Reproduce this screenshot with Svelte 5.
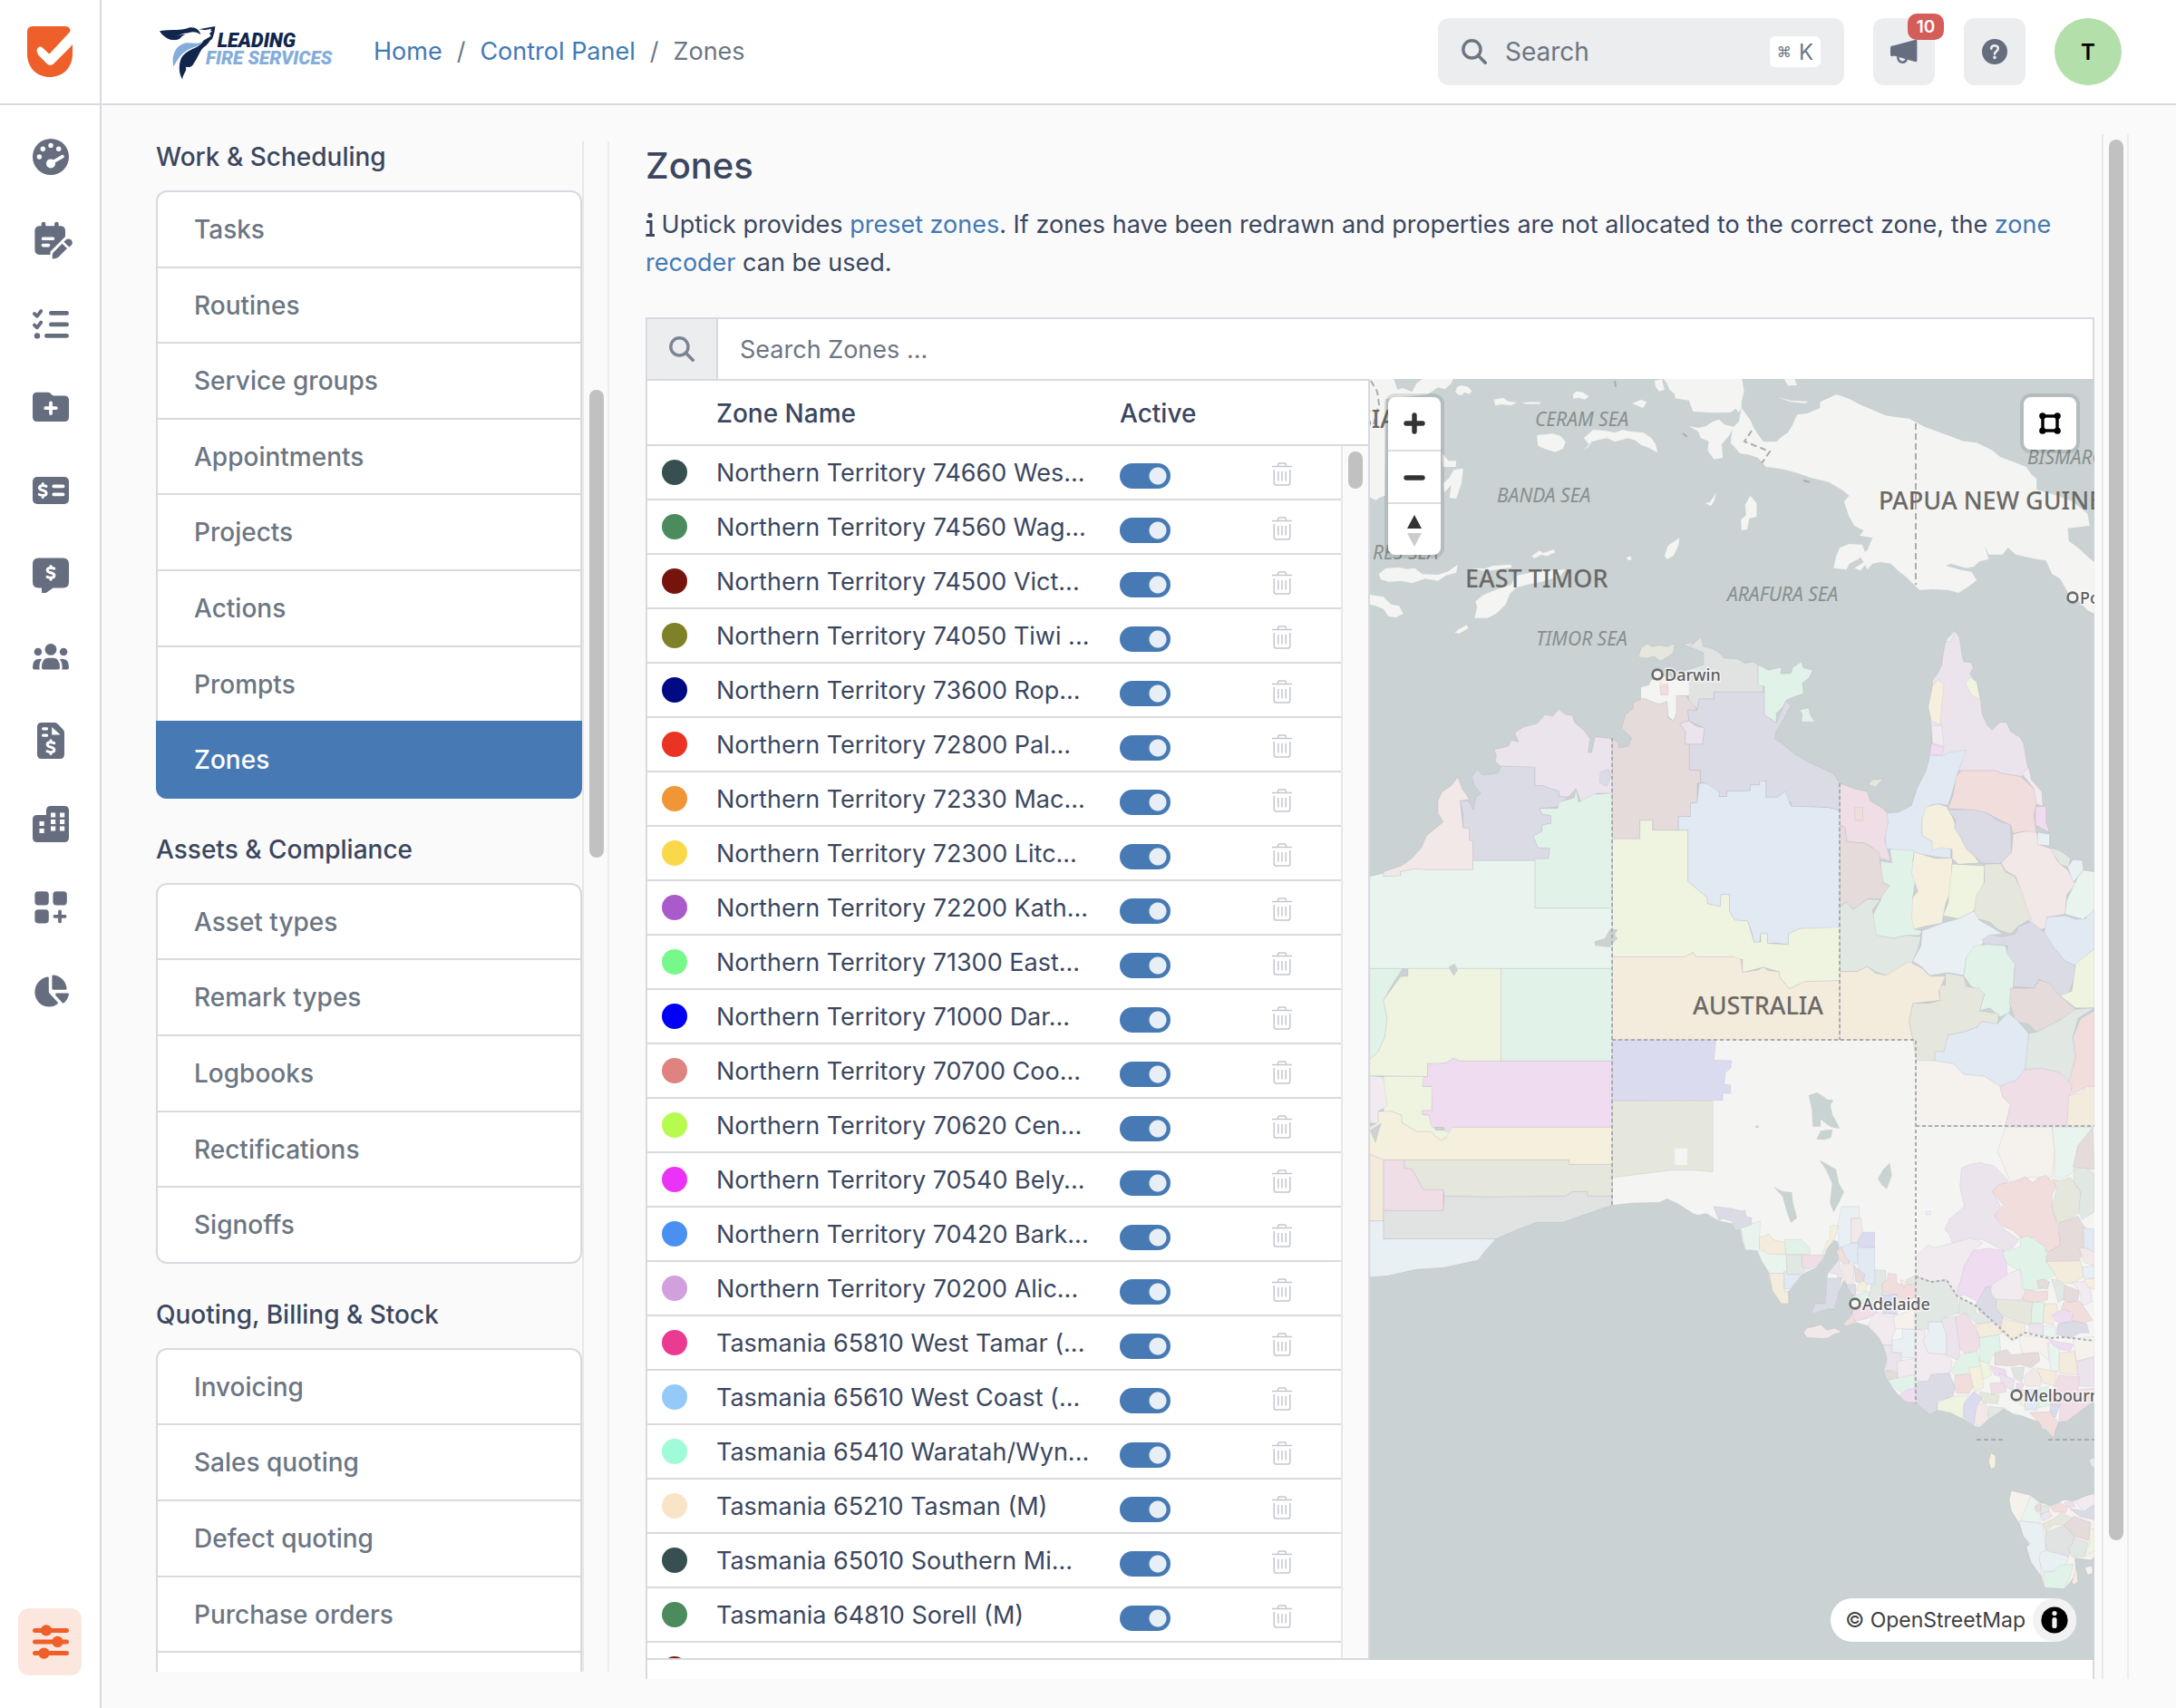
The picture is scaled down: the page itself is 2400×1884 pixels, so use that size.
<script>
  const nav = [
    'Dashboard', 'Calendar', 'Tasks', 'Projects', 'Invoices', 'Quotes',
    'Clients', 'Purchase orders', 'Properties', 'Apps', 'Reports'
  ];

  const groups = [
    { title: 'Work & Scheduling', items: ['Tasks', 'Routines', 'Service groups', 'Appointments', 'Projects', 'Actions', 'Prompts', 'Zones'] },
    { title: 'Assets & Compliance', items: ['Asset types', 'Remark types', 'Logbooks', 'Rectifications', 'Signoffs'] },
    { title: 'Quoting, Billing & Stock', items: ['Invoicing', 'Sales quoting', 'Defect quoting', 'Purchase orders', ''] }
  ];

  // Colour and short display name of each zone
  const zones = [
    ['#374f50', 'Northern Territory 74660 Wes...'],
    ['#4b8b5e', 'Northern Territory 74560 Wag...'],
    ['#75140c', 'Northern Territory 74500 Vict...'],
    ['#7f8128', 'Northern Territory 74050 Tiwi ...'],
    ['#000a83', 'Northern Territory 73600 Rop...'],
    ['#ea3323', 'Northern Territory 72800 Pal...'],
    ['#f09637', 'Northern Territory 72330 Mac...'],
    ['#f9d849', 'Northern Territory 72300 Litc...'],
    ['#a95bcc', 'Northern Territory 72200 Kath...'],
    ['#76f98a', 'Northern Territory 71300 East...'],
    ['#0000f5', 'Northern Territory 71000 Dar...'],
    ['#df8380', 'Northern Territory 70700 Coo...'],
    ['#b7fb50', 'Northern Territory 70620 Cen...'],
    ['#ea33f7', 'Northern Territory 70540 Bely...'],
    ['#4a90f3', 'Northern Territory 70420 Bark...'],
    ['#d1a0dd', 'Northern Territory 70200 Alic...'],
    ['#eb3a92', 'Tasmania 65810 West Tamar (...'],
    ['#94caf7', 'Tasmania 65610 West Coast (...'],
    ['#a0fbd9', 'Tasmania 65410 Waratah/Wyn...'],
    ['#fae4c8', 'Tasmania 65210 Tasman (M)'],
    ['#374f50', 'Tasmania 65010 Southern Mi...'],
    ['#4b8b5e', 'Tasmania 64810 Sorell (M)'],
    ['#75140c', '']
  ];

  const c = {
    sea: '#cad2d3', land: '#f4f4f2', lilac: '#ece4ec', slate: '#dbdbe6', green: '#e1f3e8', mint: '#eaf4ef',
    lime: '#eff4e1', orange: '#f3ebdc', yellow: '#f5f0de', blue: '#e1e9f3', pink: '#f0dee6', brown: '#e5dbda',
    rose: '#f3e8e8', red: '#f1dddc', sage: '#e1e8e3', khaki: '#e6e7dc', ice: '#e9f0f4', magenta: '#f0dcf0',
    violet: '#dbdbf0', grey: '#e0e3e2', cream: '#f5f1ed', mauve: '#f1ebf0'
  };

  // Islands and Papua, north of the continent
  const north = [
    '19,54 65,54 72,90 82,84 100,97 108,70 120,54 179,54 175,70 163,88 150,82 130,105 50,120 48,440 38,446 30,455 19,445',
    '183,95 187,80 195,75 208,80 215,95 210,104 200,98 196,108 188,106',
    '409,105 416,95 428,98 440,112 432,122 420,116 410,120',
    '257,122 275,117 285,128 302,132 290,142 272,138 260,142',
    '310,133 330,130 348,131 345,137 320,137',
    '523,135 540,123 551,130 544,150 532,142',
    '566,60 580,55 585,90 575,95 568,80',
    '583,54 734,54 738,95 733,130 733,150 728,165 722,152 712,165 680,166 640,162 632,125 605,118 605,105 595,90 590,70',
    '733,150 750,190 755,210 762,230 775,262 800,262 810,245 822,232 830,210 840,172 860,168 884,150 884,130 900,118 915,105 940,120 960,138 1010,175 1030,180 1055,185 1085,212 1120,235 1160,260 1185,265 1215,290 1230,312 1250,325 1280,345 1290,370 1300,385 1300,420 1340,440 1370,460 1398,500 1402,540 1360,548 1362,590 1385,620 1400,645 1411,660 1411,830 1398,820 1385,795 1375,780 1360,760 1345,715 1330,700 1318,655 1300,650 1260,635 1245,612 1235,635 1208,635 1200,605 1208,650 1190,658 1180,675 1165,680 1135,665 1125,672 1155,686 1175,692 1185,720 1170,740 1150,762 1130,752 1100,750 1075,752 1050,710 1035,690 1020,665 1000,660 985,665 975,685 968,660 960,640 975,620 985,580 960,572 968,556 950,540 940,510 930,460 940,440 925,420 900,395 865,380 840,365 810,352 780,345 765,315 748,305 730,300 712,265 716,215 728,195',
    '632,210 650,216 665,210 678,195 690,188 700,205 718,212 710,240 695,270 697,315 680,320 668,290 670,260 655,250 650,228',
    '802,115 830,126 862,128 855,135 828,130', '815,55 835,54 840,75 822,76',
    '340,240 355,238 370,235 385,242 395,262 390,285 375,296 355,285 342,275',
    '430,290 440,270 430,250 440,235 448,222 470,225 490,232 505,222 520,228 545,232 560,250 568,270 572,298 555,282 540,272 530,258 515,250 490,262 475,250 460,255 445,262 438,280',
    '750,440 762,465 762,510 748,515 744,552 733,555 732,520 742,505 740,470', '585,640 592,605 614,580 612,605 602,640 590,650',
    '910,680 915,640 922,612 940,600 965,602 970,625 958,650 940,665 935,685', '950,680 968,660 985,645 968,675 962,688',
    '663,465 672,462 685,430 680,460 674,475', '512,645 520,640 522,652 515,655', '330,640 345,622 352,630 372,618 375,628 360,640 348,636 335,648',
    '36,700 50,680 75,678 90,683 105,680 120,700 150,702 170,690 188,668 185,695 165,704 150,722 125,715 100,730 80,722 55,725 40,718',
    '220,845 225,810 222,790 235,770 260,752 290,735 300,705 340,690 395,685 385,705 350,725 320,735 300,745 288,765 280,800 262,830 245,845',
    '19,768 45,775 60,800 75,805 83,830 70,843 55,840 45,815 30,805 19,800', '182,893 190,882 205,868 208,880 190,897',
    '215,680 240,682 255,672 290,668 292,678 240,690', '160,400 172,380 180,355 198,350 195,400 185,450 172,448 175,405 162,430', '158,300 170,325 185,325 184,345 160,345'
  ];

  const topEnd = [
    ['khaki', '535,975 540,945 552,930 560,940 575,935 590,940 605,930 602,960 590,975 577,987 565,972 550,978'],
    ['grey', '620,932 640,925 635,938 655,908 660,940 675,945 690,960 700,978 725,980 740,995 755,990 765,1000 765,1065 775,1068 775,1090 680,1090 680,1113 652,1113 648,1145 632,1125 630,1080 615,1060 610,1030 640,1010 660,1000 660,960 640,945'],
    ['green', '765,1000 785,1018 810,1008 808,1030 828,1028 832,1008 848,990 852,1010 870,1018 862,1045 850,1060 852,1095 835,1105 820,1115 812,1140 800,1160 800,1192 777,1165 777,1070 765,1068'],
    ['green', '845,1150 862,1142 865,1165 874,1190 848,1188 850,1165'],
    ['land', '540,1075 555,1068 560,1050 632,1050 632,1100 608,1105 608,1160 602,1185 592,1170 590,1125 570,1130 555,1118 540,1115'],
    ['red', '576,1070 592,1066 592,1100 578,1100'], ['yellow', '578,1040 598,1035 590,1065 576,1065'],
    ['khaki', '977,1395 985,1380 1005,1378 990,1405']
  ];

  const interior = [
    ['land', '485,891 1411,891 1411,1700 690,1490 680,1480 665,1465 650,1470 640,1465 610,1432 590,1416 575,1428 520,1430 485,1438'],
    ['brown', '485,226 485,-105 497,-90 497,-75 515,-80 522,-108 503,-140 510,-185 525,-205 525,-225 545,-240 575,-220 590,-230 592,-175 602,-165 608,-190 608,-248 625,-248 648,-200 630,-200 632,-165 615,-155 625,-130 625,-88 633,-88 633,-2 654,-2 654,42 648,42 648,106 635,108 635,152 612,152 612,197 562,197 562,165 538,165 538,226'],
    ['slate', '652,-237 680,-237 680,-260 777,-260 777,-185 800,-158 818,-230 828,-215 812,-165 800,-130 797,-105 815,-85 835,-55 860,-30 882,-12 908,8 922,42 922,132 900,122 828,118 828,105 815,100 817,70 803,88 780,88 780,35 768,38 768,48 750,48 750,67 705,68 705,86 690,86 690,68 665,58 665,42 654,40 654,-2 633,-2 633,-88 658,-88 662,-140 632,-165 630,-200 648,-200'],
    ['lilac', '615,-155 632,-165 645,-148 662,-140 658,-88 625,-88 625,-130'],
    ['blue', '612,197 612,152 635,152 635,108 648,106 652,42 665,42 690,70 690,86 705,86 705,68 750,67 750,48 768,48 768,35 780,35 780,88 803,88 817,68 828,118 900,122 922,132 922,518 907,523 845,523 823,540 823,576 800,570 783,572 783,540 770,540 768,568 757,568 752,530 745,498 720,495 710,465 710,410 694,410 692,450 667,440 667,420 630,367 630,197'],
    ['lime', '485,226 538,226 538,165 562,165 562,197 630,197 630,367 667,420 667,440 692,450 694,410 710,410 710,465 720,495 745,498 757,568 770,568 770,540 783,540 783,572 823,576 823,540 845,523 922,518 922,695 855,698 825,722 807,685 805,665 775,650 735,668 735,625 720,625 718,616 645,616 640,602 625,616 485,616'],
    ['orange', '485,616 625,616 640,602 645,616 718,616 732,625 735,668 765,660 775,650 785,662 805,665 807,685 825,722 855,698 922,695 922,891 485,891'],
    ['lilac', '336,50 336,-10 270,-15 260,-30 262,-50 258,-70 285,-80 290,-100 305,-95 297,-125 315,-145 340,-155 355,-185 370,-180 382,-203 395,-185 408,-182 412,-160 432,-130 442,-105 438,-60 445,-60 452,-112 485,-105 485,75 455,75 425,105 415,60 400,88 382,85 382,68 350,50'],
    ['slate', '460,40 462,5 478,-5 482,20 474,52'],
    ['slate', '217,298 217,235 210,230 210,190 198,190 198,140 192,100 208,100 218,130 222,90 232,75 220,50 215,20 225,-5 235,15 265,8 272,-15 336,-12 336,50 350,50 382,68 382,85 400,88 380,120 345,125 350,145 367,148 367,175 350,180 350,200 333,217 342,255 365,257 362,292 336,298'],
    ['green', '336,455 336,292 362,292 365,257 342,255 333,217 350,200 350,180 367,175 367,148 350,145 345,125 380,125 382,105 402,95 412,90 415,60 420,105 450,78 485,75 485,455'],
    ['rose', '45,335 80,315 100,290 118,255 128,215 160,170 150,140 150,100 158,70 175,50 188,22 196,60 210,95 192,100 198,190 210,190 210,230 217,235 217,328 125,328 105,325 78,335 78,348 45,350'],
    ['mint', '19,350 45,340 45,350 78,348 78,335 105,325 125,328 217,328 217,298 336,298 336,455 485,455 485,655 19,655'],
    ['green', '271,655 485,655 485,961 271,961'],
    ['green', '19,655 82,655 65,700 45,760 52,820 48,880 35,930 19,955'],
    ['lime', '19,955 35,930 48,880 52,820 45,760 78,682 92,680 92,655 271,655 271,961 192,961 180,952 165,968 130,970 130,1012 19,1010'],
    ['lime', '45,1012 130,1012 120,1045 140,1045 138,1125 120,1125 120,1138 132,1140 145,1190 178,1190 165,1215 155,1225 135,1195 110,1195 80,1165 80,1140 60,1128 45,1128'],
    ['mauve', '19,1010 45,1015 52,1110 35,1128 35,1170 19,1165'],
    ['magenta', '130,970 165,968 180,952 192,961 485,961 485,1180 178,1180 178,1195 165,1195 160,1180 138,1180 132,1140 120,1138 120,1125 138,1125 138,1045 120,1045 122,1015 130,1012'],
    ['yellow', '35,1128 60,1128 80,1140 80,1165 110,1195 135,1195 155,1225 165,1215 178,1180 485,1180 485,1303 402,1303 402,1288 45,1288 19,1270 19,1180 35,1165'],
    ['khaki', '85,1288 402,1288 402,1303 485,1303 485,1408 437,1408 437,1393 408,1393 395,1408 318,1410 240,1411 162,1408 160,1387 122,1387 100,1320 85,1315'],
    ['pink', '45,1288 85,1288 85,1315 100,1320 122,1387 160,1387 160,1456 45,1456'],
    ['orange', '19,1270 45,1288 45,1490 19,1490'],
    ['grey', '45,1456 160,1456 162,1408 240,1411 395,1408 408,1393 437,1393 437,1408 485,1408 485,1438 430,1470 390,1495 340,1495 300,1520 261,1550 45,1550'],
    ['ice', '19,1490 45,1490 45,1550 261,1550 240,1590 227,1620 160,1645 107,1651 53,1672 19,1676'],
    ['violet', '485,892 684,892 680,958 714,960 712,985 702,1000 700,1038 712,1040 712,1068 697,1068 697,1091 485,1093'],
    ['khaki', '485,1093 678,1093 678,1328 640,1322 600,1322 485,1347'],
    ['land', '605,1250 629,1250 629,1305 605,1305'],
    ['lilac', '1090,5 1095,-60 1100,-90 1095,-190 1100,-260 1100,-300 1110,-320 1118,-350 1122,-400 1128,-440 1145,-460 1152,-440 1156,-390 1160,-360 1175,-358 1178,-340 1172,-320 1185,-290 1192,-240 1195,-190 1205,-150 1215,-135 1230,-160 1242,-160 1250,-130 1268,-110 1275,-90 1280,-40 1285,10 1270,20 1255,15 1235,10 1220,0 1155,0'],
    ['yellow', '1100,-280 1112,-300 1122,-285 1118,-220 1115,-150 1098,-165 1092,-210'],
    ['lime', '1163,-290 1172,-308 1185,-295 1192,-235 1175,-250'],
    ['green', '1125,-430 1145,-467 1140,-445 1135,-425'],
    ['mauve', '1098,-148 1118,-150 1122,-80 1100,-90'], ['magenta', '1098,-90 1122,-75 1118,-50 1095,-55'],
    ['blue', '1088,0 1095,-50 1120,-50 1130,-60 1165,-68 1150,0 1140,60 1130,115 1110,110 1095,115 1080,160 1080,215 1100,235 1135,260 1135,290 1105,285 1065,272 1010,258 1008,200 1012,140 1035,138 1060,115 1070,60'],
    ['pink', '922,42 950,60 975,70 980,100 1000,120 1012,138 1015,170 1008,230 1020,300 1000,290 985,255 970,240 935,235 932,190 922,180'],
    ['red', '950,122 966,122 966,165 952,165'],
    ['brown', '922,185 932,185 935,235 970,240 998,270 1000,310 1010,340 1005,370 1018,380 1015,400 1005,425 975,425 948,460 935,435 922,450'],
    ['green', '1018,260 1065,265 1062,300 1070,330 1062,420 1065,525 1080,530 1075,545 1050,545 1025,555 990,545 985,480 1000,430 1005,410 1018,380 1005,370 1000,300 1022,305'],
    ['sage', '922,452 935,435 948,460 975,425 1000,428 985,460 992,545 1025,555 1050,545 1078,550 1072,590 1060,640 1040,660 1010,678 990,665 975,648 955,665 922,665'],
    ['yellow', '1065,270 1105,290 1138,290 1135,400 1125,440 1118,505 1085,515 1065,525 1060,490 1062,420 1072,400 1060,340'],
    ['lime', '1138,310 1200,315 1198,400 1185,430 1180,465 1150,490 1120,480 1130,440 1132,400'],
    ['yellow', '1080,215 1080,160 1088,120 1110,110 1128,120 1140,160 1145,190 1160,240 1175,270 1190,305 1150,310 1138,290 1138,260 1115,255 1100,265 1100,235'],
    ['slate', '1130,130 1180,128 1205,140 1225,165 1250,180 1252,270 1230,308 1195,305 1165,260 1155,225 1142,190 1145,165'],
    ['red', '1155,0 1220,0 1235,10 1255,15 1270,20 1295,60 1305,90 1298,120 1295,150 1300,210 1280,200 1255,208 1250,180 1220,155 1205,140 1180,130 1130,125 1140,80 1145,20'],
    ['magenta', '1298,120 1318,118 1318,170 1325,205 1298,180'], ['mauve', '1272,10 1285,-10 1290,30 1310,70 1312,118 1300,110 1295,60'],
    ['rose', '1255,210 1280,200 1300,205 1305,245 1330,260 1340,300 1360,330 1375,375 1358,410 1355,475 1320,485 1318,520 1300,530 1285,495 1270,400 1260,350 1240,330 1232,305 1252,270'],
    ['khaki', '1200,310 1232,308 1240,335 1258,350 1272,400 1280,450 1290,490 1265,515 1250,540 1225,525 1210,500 1185,490 1180,465 1185,410 1200,370'],
    ['ice', '1080,530 1120,505 1150,490 1180,465 1190,495 1235,540 1210,545 1195,575 1165,620 1160,678 1130,668 1095,678 1080,650 1062,630 1078,580'],
    ['slate', '1195,560 1210,542 1235,550 1260,540 1265,515 1290,500 1315,535 1330,560 1335,590 1355,630 1375,645 1372,690 1360,745 1345,745 1325,710 1305,690 1295,720 1255,715 1258,650 1240,610 1245,580 1200,575'],
    ['green', '1165,620 1180,580 1205,575 1240,580 1245,610 1258,640 1255,720 1248,800 1230,815 1210,785 1190,795 1200,740 1190,725 1175,715 1160,680'],
    ['blue', '1320,485 1355,480 1375,492 1395,490 1400,465 1411,460 1411,590 1375,645 1355,630 1335,590 1315,535'],
    ['mint', '1358,430 1370,385 1380,350 1390,330 1411,335 1411,460 1390,492 1355,475'],
    ['lime', '1375,640 1411,590 1411,785 1375,785 1345,745 1368,730'],
    ['sage', '1325,255 1345,265 1365,290 1362,320 1345,310'], ['ice', '1360,320 1370,295 1388,298 1390,330 1370,370'], ['ice', '1302,205 1325,210 1325,248 1302,245'],
    ['brown', '1250,720 1295,720 1305,692 1325,705 1345,745 1375,790 1365,820 1345,825 1320,850 1300,865 1285,840 1260,830 1248,770'],
    ['khaki', '1125,670 1160,680 1165,715 1190,720 1200,740 1190,795 1228,805 1225,840 1195,830 1185,850 1160,865 1130,875 1122,930 1105,935 1105,960 1070,965 1062,890 1055,830 1062,770 1095,770 1115,760 1112,710 1125,710'],
    ['orange', '922,665 955,665 975,648 990,670 1010,678 1055,632 1080,655 1095,680 1125,680 1112,730 1115,760 1062,770 1055,830 1062,891 922,891'],
    ['blue', '1130,875 1160,865 1185,850 1195,830 1225,838 1245,800 1265,830 1285,870 1278,990 1260,1025 1230,1045 1200,1012 1160,1005 1140,970 1105,960 1105,930 1122,930'],
    ['sage', '1285,870 1300,865 1345,825 1375,790 1411,785 1380,820 1370,880 1375,950 1360,1035 1345,1000 1310,985 1278,990'],
    ['red', '1411,795 1411,1045 1395,1048 1370,1070 1362,1035 1375,950 1370,880 1385,820'],
    ['cream', '1068,960 1105,960 1140,970 1160,1005 1200,1012 1230,1045 1235,1080 1250,1105 1240,1177 1068,1177'],
    ['pink', '1230,1045 1260,1025 1278,990 1310,985 1345,1000 1368,1040 1358,1177 1240,1177 1250,1105 1235,1080'],
    ['orange', '1362,1075 1385,1068 1395,1045 1411,1045 1411,1177 1358,1177'],
    ['cream', '1240,1180 1330,1180 1335,1260 1330,1345 1290,1345 1250,1360 1225,1260'],
    ['mint', '1330,1180 1408,1180 1395,1220 1380,1240 1370,1330 1350,1350 1335,1345 1335,1260'],
    ['brown', '1408,1180 1411,1320 1390,1318 1370,1310 1380,1240']
  ];

  const lakes = [
    '862,1075 878,1065 890,1078 898,1088 910,1090 904,1108 908,1140 915,1160 922,1185 905,1180 885,1155 885,1178 870,1178 868,1120',
    '877,1220 885,1192 900,1188 908,1188 905,1215 892,1222', '883,1290 895,1300 915,1320 920,1365 930,1395 920,1430 910,1462 903,1430 907,1365 895,1320',
    '995,1350 1005,1320 1018,1298 1022,1340 1012,1385 1002,1370', '795,1378 812,1392 830,1395 832,1430 840,1480 828,1497 820,1460 812,1410',
    '450,565 470,555 480,525 495,525 490,545 495,555 480,585 452,580', '170,650 182,638 188,660 180,680', '19,1190 42,1165 35,1200 30,1235', '760,1175 766,1175 766,1182 760,1182'
  ];

  const southEast = [
    ['land', '-12,239 -12,150 1230,150 1230,730 1200,740 1140,785 1110,788 1100,800 1095,830 1080,812 1060,805 1045,785 1020,780 990,770 960,765 930,750 900,770 880,780 850,802 830,797 800,780 755,763 710,755 685,767 660,750 640,735 605,732 580,712 560,690 545,670 535,650 545,615 530,575 515,555 480,525 440,515 410,526 400,520 430,495 440,440 400,400 385,430 370,480 345,480 295,493 305,465 340,465 345,400 350,380 385,345 385,310 370,265 365,295 345,315 330,345 310,365 260,385 225,425 212,435 218,465 210,455 195,465 165,430 152,378 130,350 115,320 75,318 65,290 60,262 45,262 30,240 0,232'],
    ['lilac', '785,145 790,95 820,85 850,80 900,90 945,130 900,150 895,165 920,200 900,225 930,262 980,290 960,312 930,320 860,290 820,290 760,300 750,275 735,262 750,235 800,200'],
    ['red', '893,158 915,140 940,135 970,132 1000,118 1025,135 1045,122 1070,115 1105,145 1090,165 1090,205 1105,240 1118,305 1075,325 1050,300 1030,285 985,285 960,265 930,255 900,225 930,195 905,175'],
    ['khaki', '1090,125 1120,130 1150,120 1185,160 1180,215 1150,235 1125,250 1105,240 1090,200 1105,150'],
    ['sage', '1165,95 1200,95 1230,110 1230,215 1190,235 1178,215 1185,160 1160,130'],
    ['brown', '1110,245 1150,235 1175,225 1200,260 1195,310 1180,350 1070,350 1075,325 1118,305'],
    ['mauve', '640,335 680,305 700,312 760,300 820,285 860,300 830,320 800,362 790,400 765,445 740,400 690,405 640,390'],
    ['magenta', '800,362 830,320 880,314 930,320 940,360 940,392 890,420 870,420 850,462 800,440 770,450 790,395'],
    ['green', '925,325 985,310 985,285 1010,280 1030,290 1068,310 1070,350 1100,385 1060,405 1055,425 995,428 990,380 940,355'],
    ['mauve', '890,415 940,385 985,370 992,455 905,455 885,440'],
    ['orange', '1070,350 1185,348 1195,390 1175,400 1165,410 1110,408 1100,385'],
    ['slate', '850,450 870,420 885,418 890,440 905,455 915,490 930,495 920,530 880,505 850,490 838,465'],
    ['khaki', '905,452 1025,460 1020,525 930,500 905,480'],
    ['green', '1025,460 1065,462 1060,518 1020,518'],
    ['orange', '1065,465 1105,465 1110,490 1090,500 1095,525 1060,515'],
    ['magenta', '1093,495 1130,478 1160,495 1150,515 1120,518 1100,512'],
    ['red', '1130,460 1180,458 1200,480 1224,510 1190,518 1155,512 1160,490 1120,478'],
    ['slate', '1110,520 1165,512 1205,520 1212,545 1180,545 1150,560 1105,550'],
    ['red', '1000,425 1040,432 1075,430 1075,455 1035,462 992,455'],
    ['brown', '1040,402 1060,398 1082,405 1075,425 1045,422'],
    ['sage', '1088,398 1115,402 1132,415 1135,450 1110,462 1100,430'],
    ['brown', '1132,415 1180,430 1175,455 1150,462 1128,455'],
    ['mauve', '1155,405 1215,405 1222,460 1190,470 1180,430'],
    ['yellow', '1195,400 1230,395 1230,425 1210,420'], ['rose', '1180,312 1230,315 1230,362 1195,352'], ['blue', '1193,258 1230,262 1230,325 1195,310'],
    ['ice', '1190,365 1230,362 1230,395 1195,395'], ['mint', '1060,525 1105,530 1100,558 1060,552'], ['lilac', '1015,518 1060,520 1060,550 1012,545'],
    ['sage', '640,390 690,405 740,400 775,445 785,490 740,500 735,515 680,515 680,535 640,535'],
    ['sage', '785,448 835,470 838,490 890,515 840,520 808,495 780,490'],
    ['pink', '770,500 805,490 835,530 855,570 840,597 800,600 780,585'],
    ['lilac', '725,505 770,500 785,590 780,620 740,605 740,550 725,545'],
    ['ice', '680,515 725,515 740,550 740,602 680,600 662,565 680,545'],
    ['mauve', '640,535 670,540 665,570 680,600 740,605 760,625 750,655 690,660 680,680 640,675'],
    ['orange', '835,522 890,515 925,545 905,552 850,558'],
    ['green', '850,558 915,550 920,595 890,610 880,630 850,620 850,600'],
    ['green', '755,650 785,605 840,595 855,630 850,640 820,660 770,660'],
    ['orange', '925,505 975,515 1000,520 1000,543 960,567 920,540'],
    ['slate', '638,680 680,675 690,658 750,655 770,695 760,720 712,730 708,758 685,767 660,750 640,735'],
    ['red', '765,685 770,660 830,655 830,690 815,710 775,710'],
    ['yellow', '815,640 860,635 862,695 835,705 828,690'],
    ['lime', '712,735 760,718 815,715 798,740 795,780 755,763 710,755'],
    ['violet', '798,740 830,705 860,722 840,745 830,797 798,775'],
    ['rose', '840,742 870,735 882,778 850,802 832,792'],
    ['sage', '880,745 935,750 900,770 880,780'],
    ['khaki', '850,705 915,715 910,738 860,735'],
    ['brown', '900,600 940,590 955,605 1045,598 1050,620 1020,640 985,630 960,635 900,632'],
    ['cream', '980,550 1080,560 1075,575 1080,620 1050,598 990,600'],
    ['mint', '1078,570 1115,575 1110,650 1085,650'],
    ['orange', '1115,600 1165,595 1175,660 1115,655'],
    ['cream', '1160,560 1230,555 1230,610 1170,622'], ['lilac', '1172,622 1230,610 1230,690 1180,690'],
    ['pink', '1110,660 1180,665 1175,700 1230,695 1230,730 1140,785 1112,788 1118,740 1085,740'],
    ['rose', '995,665 1030,640 1055,665 1050,690 1005,690'],
    ['orange', '1040,640 1105,650 1098,690 1058,680'],
    ['magenta', '885,635 935,645 940,665 900,660'], ['lime', '850,620 880,628 890,660 862,672'],
    ['lilac', '915,655 965,672 960,700 925,690'], ['pink', '885,682 930,680 938,705 890,712'],
    ['grey', '955,640 998,638 990,680 965,668'], ['violet', '1085,740 1118,740 1100,775 1082,765'],
    ['red', '1015,762 1085,760 1110,790 1095,830 1065,805'], ['blue', '1000,700 1045,698 1040,755 1000,755'],
    ['green', '1045,695 1080,692 1085,740 1045,750'], ['yellow', '990,700 1002,700 1000,745 985,740'], ['magenta', '972,682 998,684 985,705 975,700'],
    ['magenta', '1080,562 1115,570 1160,575 1150,595 1120,590 1095,580'],
    ['mauve', '505,485 545,500 570,500 575,530 560,560 560,578 530,578 515,555 480,525'],
    ['cream', '565,500 635,480 635,535 570,532'],
    ['ice', '560,565 595,560 595,535 635,535 635,612 595,612 590,598 560,598'],
    ['lilac', '530,578 560,578 560,598 590,600 592,620 578,645 540,648 545,615'],
    ['mauve', '578,622 635,614 635,672 578,672'], ['brown', '537,648 578,650 578,672 548,672'],
    ['green', '545,674 635,658 636,698 600,710 580,700'],
    ['magenta', '585,715 610,700 637,695 637,735 605,732'],
    ['sage', '503,372 540,375 540,400 528,410 530,440 503,470 480,460'], ['red', '527,410 545,400 548,382 575,385 575,410 637,415 637,445 595,470 575,440 530,435'],
    ['khaki', '608,400 638,388 638,412 612,412'], ['yellow', '588,400 608,405 600,422'],
    ['violet', '525,440 577,440 577,495 530,492'],
    ['ice', '382,240 395,200 452,200 452,232 425,232 425,305 385,312'], ['rose', '425,232 458,232 463,270 448,298 425,298'],
    ['violet', '448,290 465,270 503,270 503,312 450,310'], ['blue', '445,312 503,312 503,412 475,412 450,370'], ['blue', '388,312 425,300 448,300 445,358 405,345'],
    ['red', '375,322 395,312 405,335 422,355 395,355'], ['rose', '395,358 435,358 432,415 408,410 398,385'],
    ['brown', '435,362 470,385 465,410 440,405'], ['slate', '408,415 440,412 440,445 425,438'],
    ['yellow', '330,330 345,295 355,290 357,252 382,252 372,285 345,315'],
    ['yellow', '440,430 460,402 478,410 472,430'], ['green', '430,445 480,430 485,445 470,460 430,478'], ['pink', '430,485 470,470 510,490 480,505 430,515'],
    ['red', '398,522 425,500 440,512 412,526'],
    ['mint', '60,255 125,240 122,285 122,320 210,332 212,384 155,382 130,350 115,320 75,318'],
    ['orange', '120,285 155,275 165,290 208,298 210,330 150,330 122,310'], ['green', '205,290 260,290 288,315 288,330 210,330'],
    ['sage', '212,332 262,332 262,360 275,375 255,385 212,385'], ['pink', '262,332 335,332 320,358 280,372 262,362'],
    ['blue', '203,375 215,385 255,385 225,425 203,425'], ['orange', '155,382 203,382 203,428 218,435 218,465 195,465 165,430'],
    ['slate', '-30,200 30,205 60,212 75,210 78,228 95,230 95,250 50,262 30,240 0,232 -12,239'],
    ['lilac', '352,380 385,345 395,395 380,398 380,385'], ['slate', '345,396 395,395 370,480 345,480 295,492 305,465 340,465'],
    ['rose', '268,545 278,532 300,528 325,522 345,538 370,532 396,542 370,548 345,560 280,558'],
    ['ice', '672,213 688,213 688,222 672,222'],
    ['yellow', '880,895 888,872 903,880 902,910 888,917'], ['blue', '1212,890 1230,885 1230,915 1218,905'],
    ['cream', '948,1000 955,975 1020,988 1045,1005 1085,1017 1130,1000 1160,1003 1200,990 1230,983 1230,1155 1220,1165 1165,1158 1170,1200 1150,1225 1130,1243 1065,1240 1055,1210 1020,1170 1005,1130 1015,1120 995,1100 985,1070 955,1030'],
    ['mint', '985,1058 1020,990 1045,1005 1030,1025 1052,1040 1050,1062'], ['ice', '980,1058 1058,1065 1070,1135 1050,1165 1055,1210 1020,1170 1005,1130 1020,1118 995,1100'],
    ['grey', '1068,1090 1095,1080 1130,1070 1165,1100 1145,1155 1095,1150 1070,1135'], ['ice', '1050,1145 1070,1138 1145,1155 1135,1175 1095,1195 1060,1195 1048,1165'],
    ['green', '1060,1200 1095,1195 1118,1178 1160,1175 1148,1215 1130,1243 1065,1240'],
    ['brown', '1130,1070 1160,1045 1218,1062 1210,1112 1165,1100'], ['khaki', '1060,1065 1100,1050 1120,1035 1155,1050 1130,1068 1095,1068 1070,1088'],
    ['slate', '1150,1025 1190,1030 1230,1015 1230,1055 1180,1045'], ['red', '1085,1020 1115,1008 1140,1020 1135,1035 1095,1032'],
    ['brown', '1032,1020 1055,1005 1052,1030 1040,1033'], ['sage', '1055,1015 1082,1018 1075,1038 1050,1038'], ['lilac', '1052,1040 1080,1030 1090,1045 1060,1058'],
    ['mauve', '1165,1003 1200,990 1230,983 1230,1012 1195,1032'], ['magenta', '1130,1008 1158,1003 1165,1018 1145,1022'],
    ['lime', '1215,1080 1230,1080 1230,1140 1195,1155 1215,1120'], ['sage', '1145,1135 1165,1105 1210,1118 1195,1155 1155,1155'],
    ['cream', '1198,1185 1222,1180 1224,1200 1208,1205'], ['orange', '1155,1225 1172,1185 1175,1225 1162,1232']
  ];

  const seas = [
    { t: 'CERAM SEA', x: 182, y: 52 }, { t: 'BANDA SEA', x: 140, y: 136 }, { t: 'ARAFURA SEA', x: 394, y: 245 },
    { t: 'TIMOR SEA', x: 183, y: 294 }, { t: 'BISMARCK SEA', x: 725, y: 94 }, { t: 'RES SEA', x: 3, y: 199 }
  ];
  const countries = [
    { t: 'EAST TIMOR', x: 105, y: 230 }, { t: 'PAPUA NEW GUINEA', x: 561, y: 144 }, { t: 'AUSTRALIA', x: 356, y: 701 }
  ];
  const cities = [
    { t: 'Darwin', x: 317, y: 326 }, { t: 'Port Moresby', x: 775, y: 241 }, { t: 'Adelaide', x: 535, y: 1020 }, { t: 'Melbourne', x: 713, y: 1121 }
  ];
</script>

{#snippet dollar(x, y)}
  <g transform="translate({x} {y})" fill="none" stroke="#fff" stroke-width="3" stroke-linecap="round">
    <path d="M3.8 -4.6C1 -5.8 -3.8 -6 -3.8 -2.9C-3.8 .6 3.9 -.8 3.9 2.9C3.9 6 -.8 6 -3.9 4.5M0 -7.4V-5.6M0 5.6V7.4" />
  </g>
{/snippet}

{#snippet magnifier()}
  <svg class="magnifier" viewBox="0 0 28 28" aria-hidden="true">
    <circle cx="11.4" cy="11.4" r="9.6" fill="none" stroke="currentColor" stroke-width="3.4" />
    <path d="M18.6 18.6L26.2 26.2" stroke="currentColor" stroke-width="3.6" stroke-linecap="round" />
  </svg>
{/snippet}

{#snippet areas(list)}
  {#each list as [name, points]}
    <polygon {points} fill={c[name]} class:zone={name !== 'land'} vector-effect="non-scaling-stroke" />
  {/each}
{/snippet}

<div class="shell">
  <nav class="rail" aria-label="Primary">
    <a class="brand" href="#home" aria-label="Uptick">
      <svg viewBox="0 0 50 56">
        <path d="M6 0H42Q46 0 47.5 3.5L46 14L25.5 34L18.5 26.5A4 4 0 0 0 12.6 32L22 41.5A5 5 0 0 0 29 41.5L50 20.5V30C50 47 38 56 25 56S0 47 0 30V6Q0 0 6 0Z" fill="#ee5f29" />
        <path d="M14.5 26.5L24.5 36L50 8.5" fill="none" stroke="#fff" stroke-width="7.6" stroke-linejoin="round" stroke-linecap="round" />
        <path d="M50 20V28L46 25Z" fill="#ee5f29" />
      </svg>
    </a>
    <div class="rail-items">
      {#each nav as label, i}
        <a class="rail-link" href="#{i}" aria-label={label}>
          <svg viewBox="0 0 40 40">
            {#if i === 0}
              <circle cx="20" cy="20" r="20" />
              <g fill="#fff"><circle cx="7.4" cy="20" r="2.7" /><circle cx="11.3" cy="11.2" r="2.7" /><circle cx="20" cy="7.4" r="2.7" /><circle cx="28.7" cy="11.2" r="2.7" /><circle cx="20" cy="27.4" r="5" /></g>
              <path d="M21 26.5L33 19.6" stroke="#fff" stroke-width="3.6" stroke-linecap="round" />
            {:else if i === 1}
              <rect x="2.4" y="4.2" width="33.6" height="31.8" rx="5" />
              <path d="M12 2V7M26.4 2V7" stroke="#656d7f" stroke-width="4.6" stroke-linecap="round" />
              <path d="M11.5 18.2H22.5M11.5 25.6H17.5" stroke="#fff" stroke-width="3.6" stroke-linecap="round" />
              <path d="M19 42L19.6 32.6L36 16L46 20L46 30Z" fill="#fff" />
              <path d="M22.3 34L32.6 23.7L38 29L28 39Q25 40.6 21.8 40.4Q21.4 37 22.3 34Z" />
              <path d="M34.4 21.8L37 19.2Q39.8 17.6 42.4 19.6Q44.8 22 43.2 25L40.2 27.4Z" />
            {:else if i === 2}
              <path d="M1.9 9L4.9 11.8L9.3 6M1.9 21.5L4.9 24.3L9.3 18.5" fill="none" stroke="#656d7f" stroke-width="3.8" stroke-linecap="round" stroke-linejoin="round" />
              <circle cx="5" cy="33.4" r="3.2" />
              <path d="M20.4 8.4H37.6M20.4 20.9H37.6M15.4 33.4H37.6" stroke="#656d7f" stroke-width="4.8" stroke-linecap="round" />
            {:else if i === 3}
              <path d="M5 3.8H16.5Q18.6 3.8 20 5.2L21.2 6.6Q22.4 7.6 24 7.6H35Q40 7.6 40 12.6V31Q40 36 35 36H5Q0 36 0 31V8.8Q0 3.8 5 3.8Z" />
              <path d="M20 15.4V27M14.2 21.2H25.8" stroke="#fff" stroke-width="3.8" stroke-linecap="round" />
            {:else if i === 4}
              <rect y="5" width="40" height="30" rx="5" />
              {@render dollar(11.2, 20)}
              <path d="M23.2 15.4H33.6M23.2 24.4H33.6" stroke="#fff" stroke-width="3.6" stroke-linecap="round" />
            {:else if i === 5}
              <path d="M6.5 2.4H33.5Q40 2.4 40 8.9V29Q40 35.5 33.5 35.5H22.5L15.5 40.4Q14.6 41 13.4 41H10V35.5H6.5Q0 35.5 0 29V8.9Q0 2.4 6.5 2.4Z" />
              {@render dollar(20, 18.8)}
            {:else if i === 6}
              <circle cx="20" cy="11.4" r="6.4" /><circle cx="5.9" cy="14" r="4.3" /><circle cx="34.1" cy="14" r="4.3" />
              <path d="M10 31.6Q10 20.8 17 20.8H23Q30 20.8 30 31.6Q30 33.6 28 33.6H12Q10 33.6 10 31.6Z" />
              <path d="M10.2 22.2Q6.6 26.4 7.6 33.6H2Q0 33.6 0 31.6Q0 22.2 6 22Q8.6 21.6 10.2 22.2ZM29.8 22.2Q33.4 26.4 32.4 33.6H38Q40 33.6 40 31.6Q40 22.2 34 22Q31.4 21.6 29.8 22.2Z" />
            {:else if i === 7}
              <path d="M10 0H24Q26 0 27.6 1.4L33.6 7.8Q35 9.2 35 11.4V35Q35 40 30 40H10Q5 40 5 35V5Q5 0 10 0Z" />
              <path d="M21.2 5V13.6H30.6Z" fill="#fff" />
              <path d="M11.6 6.8H15.6M11.6 14.2H15.6" stroke="#fff" stroke-width="3.2" stroke-linecap="round" />
              {@render dollar(20, 27.2)}
            {:else if i === 8}
              <path d="M20 0H35Q40 0 40 5V35Q40 40 35 40H5Q0 40 0 35V15Q0 10 5 10H15V5Q15 0 20 0Z" />
              <path d="M7.5 17H12.7V22H7.5ZM7.5 25H12.7V30H7.5ZM20 7.4H25.2V12.4H20ZM30 7.4H35.2V12.4H30ZM20 15H25.2V20H20ZM30 15H35.2V20H30ZM20 22.6H25.2V27.6H20ZM30 22.6H35.2V27.6H30Z" fill="#fff" />
            {:else if i === 9}
              <rect x="2.4" y="2.2" width="15.4" height="15.2" rx="3.6" /><rect x="22.4" y="2.2" width="15.4" height="15.2" rx="3.6" /><rect x="2.4" y="22.2" width="15.4" height="15.2" rx="3.6" />
              <path d="M30 24.4V35.4M24.4 29.8H35.6" stroke="#656d7f" stroke-width="3.8" stroke-linecap="round" />
            {:else}
              <path d="M17.8 5.4V20.6Q17.8 22 18.8 23L27.6 32.4Q28.6 33.6 27.2 34.6Q23.6 37.6 18.8 37.6C9.4 37.6 2.4 30.4 2.4 21.4C2.4 12.8 8.6 6 16.2 4.6Q17.8 4.2 17.8 5.4Z" />
              <path d="M21.4 4Q21.4 2.4 23 2.6C31 3.4 36.6 9.4 37.6 17Q37.8 18.8 36.2 18.8H23Q21.4 18.8 21.4 17.2Z" />
              <path d="M27 22.4H38.6Q40.4 22.4 40 24.2Q38.8 29.4 35 33Q33.6 34 32.4 32.8L25.8 25.4Q23.8 22.4 27 22.4Z" />
            {/if}
          </svg>
        </a>
      {/each}
    </div>
    <a class="rail-active" href="#control" aria-label="Control Panel">
      <svg viewBox="0 0 40 40">
        <path d="M2.5 7.4H37.5M2.5 20H37.5M2.5 32.6H37.5" stroke="#ee5f29" stroke-width="5" stroke-linecap="round" />
        <g fill="#ee5f29"><circle cx="15" cy="7.4" r="6.2" /><circle cx="27.5" cy="20" r="6.2" /><circle cx="12.5" cy="32.6" r="6.2" /></g>
      </svg>
    </a>
  </nav>

  <div class="page">
    <header>
      <svg class="client-logo" viewBox="0 0 630 240" role="img" aria-label="Leading Fire Services">
        <path d="M18 52C60 45 90 52 118 40C135 37 150 46 154 64C140 52 120 52 108 62C118 66 122 72 120 78C112 70 100 66 86 76C66 90 34 78 18 52Z" fill="#10264d" />
        <path d="M148 46L202 36C201 52 197 66 192 78L184 84C178 98 166 102 158 112C146 130 140 150 124 168L136 146C130 168 120 174 104 170C112 182 92 196 94 212C80 190 82 162 88 146C94 128 116 116 134 108C152 100 160 90 162 84L188 68L180 62L192 52Z" fill="#10264d" />
        <path d="M60 84C74 64 100 56 124 58C136 60 140 70 134 78L122 84C116 76 104 72 90 78Z" fill="#fff" />
        <path d="M158 50L190 44L182 58L187 66L162 82L152 72Z" fill="#fff" />
        <path d="M64 170C56 134 70 100 100 92C120 88 142 98 158 88C150 106 124 104 106 118C84 134 82 140 64 170Z" fill="#84addb" />
        <path d="M86 76C78 84 52 84 34 68C46 70 58 72 70 70C80 66 92 62 104 62C96 66 90 70 86 76Z" fill="#10264d" />
        <text x="209" y="105" class="logo-a">LEADING</text>
        <text x="171" y="163" class="logo-b">FIRE SERVICES</text>
      </svg>
      <nav class="crumbs" aria-label="Breadcrumb">
        <a href="#home">Home</a><span>/</span><a href="#control">Control Panel</a><span>/</span><span>Zones</span>
      </nav>
      <div class="tools">
        <button class="search" type="button">
          {@render magnifier()}
          <span class="search-label">Search</span>
          <kbd><span class="cmd">⌘</span> K</kbd>
        </button>
        <button class="tool" type="button" aria-label="Announcements">
          <svg viewBox="0 0 30 30">
            <path d="M1 9.4Q1 8.6 2 8.6L4 8.2L27 2Q29.4 1.4 29.4 3.4V24.6Q29.4 26.6 27 26L4 19.6L2 20.2Q0 20.2 0 18.6V10.4Q0 8.6 1 9.4Z" fill="#656d7f" />
            <path d="M8.4 20.4C8 24.6 10.4 26.8 13.6 26.8Q16.8 26.6 17.8 23.2" fill="none" stroke="#656d7f" stroke-width="2.6" />
          </svg>
          <span class="badge">10</span>
        </button>
        <button class="tool" type="button" aria-label="Help">
          <svg viewBox="0 0 30 30">
            <circle cx="15" cy="15" r="14" fill="#656d7f" />
            <path d="M11.2 11.6Q11.4 8.2 15 8.2Q18.8 8.4 18.8 11.6Q18.8 13.4 16.8 14.6Q15 15.6 15 17.4" fill="none" stroke="#ebedee" stroke-width="2.6" stroke-linecap="round" />
            <circle cx="15" cy="21.4" r="1.8" fill="#ebedee" />
          </svg>
        </button>
        <button class="avatar" type="button">T</button>
      </div>
    </header>

    <div class="body">
      <aside>
        <div class="menu">
          {#each groups as g}
            <section>
              <h2>{g.title}</h2>
              <ul>
                {#each g.items as item}
                  <li class:current={item === 'Zones'}><a href="#{item}">{item}</a></li>
                {/each}
              </ul>
            </section>
          {/each}
        </div>
        <div class="track menu-track"><div class="thumb"></div></div>
      </aside>

      <main>
        <div class="content">
          <h1>Zones</h1>
          <p>
            <svg class="info" viewBox="0 0 10 28" aria-hidden="true"><circle cx="5" cy="3.4" r="2.6" fill="#3b475f" /><path d="M1 10.4H6V25.4M.4 25.6H10" fill="none" stroke="#3b475f" stroke-width="3" /></svg>
            Uptick provides <a href="#preset">preset zones</a>. If zones have been redrawn and properties are not allocated to the correct zone, the <a href="#recoder">zone recoder</a> can be used.
          </p>
          <div class="card">
            <label class="filter">
              <span class="addon">{@render magnifier()}</span>
              <input type="text" placeholder="Search Zones ..." aria-label="Search Zones" />
            </label>
            <div class="split">
              <div class="table-pane">
                <table>
                  <colgroup><col class="c-dot" /><col class="c-name" /><col class="c-active" /><col /></colgroup>
                  <thead><tr><th></th><th>Zone Name</th><th>Active</th><th></th></tr></thead>
                  <tbody>
                    {#each zones as [color, name]}
                      <tr>
                        <td><svg class="dot" viewBox="0 0 28 28"><circle cx="14" cy="14" r="14" fill={color} /></svg></td>
                        <td class="name">{name}</td>
                        <td class="active"><input type="checkbox" checked aria-label="{name} active" /></td>
                        <td class="del">
                          <button type="button" aria-label="Delete {name}">
                            <svg viewBox="0 0 22 26"><path d="M0 4.5H22M6.6 4V2.4Q6.6 1 8 1H14Q15.4 1 15.4 2.4V4M2.2 8V22.4Q2.2 25 4.8 25H17.2Q19.8 25 19.8 22.4V8M6.8 10V20.6M11 10V20.6M15.2 10V20.6" fill="none" stroke="#c4c7cd" stroke-width="1.5" /></svg>
                          </button>
                        </td>
                      </tr>
                    {/each}
                  </tbody>
                </table>
                <div class="track table-track"><div class="thumb"></div></div>
              </div>
              <div class="map">
                <svg class="chart" viewBox="0 0 799 1413" preserveAspectRatio="xMidYMid slice" role="img" aria-label="Zone map">
                  <rect width="799" height="1413" fill={c.sea} />
                  <g transform="translate(-11 -18) scale(.574 .33333)">
                    {#each north as points}<polygon {points} fill={c.land} />{/each}
                    {@render areas(topEnd)}
                  </g>
                  <g transform="translate(-11 432) scale(.574 .33333)">{@render areas(interior)}</g>
                  <g transform="translate(389 832) scale(.33333 .4043)">{@render areas(southEast)}</g>
                  <g transform="translate(-11 432) scale(.574 .33333)">
                    {#each lakes as points}<polygon {points} fill="#c9d3d2" />{/each}
                  </g>
                  <g class="border">
                    <path d="M602 49V227M421 57L413 69L441 80L432 93M1 2L8 14L10 28L4 50M478 112L486 114M270 2L271 9M345 60L350 64" stroke-dasharray="7 4" />
                    <path d="M267 396V911M518 446V729M267 729H602V1130M602 824H799" stroke-dasharray="4 3" />
                    <path d="M602 990L619 996L636 994L648 1012L668 1022L709 1060L722 1052L749 1058L766 1057L799 1061" stroke-dasharray="3 3" />
                    <path d="M669 1170H700M748 1170H799" stroke-dasharray="5 3" />
                  </g>
                  {#each seas as s}<text class="sea" x={s.x} y={s.y}>{s.t}</text>{/each}
                  <text class="country" x="29" y="54" text-anchor="end">SIA</text>
                  {#each countries as s}<text class="country" x={s.x} y={s.y}>{s.t}</text>{/each}
                  {#each cities as s}
                    <circle cx={s.x} cy={s.y} r="5.4" fill="#f4f4f2" stroke="#6b6b6b" stroke-width="2.6" />
                    <text class="city" x={s.x + 8} y={s.y + 7}>{s.t}</text>
                  {/each}
                </svg>
                <div class="zoom">
                  <button type="button" aria-label="Zoom in"><svg viewBox="0 0 58 58"><path d="M29 20V38M20 29H38" stroke="#333" stroke-width="5.4" stroke-linecap="round" /></svg></button>
                  <button type="button" aria-label="Zoom out"><svg viewBox="0 0 58 58"><path d="M20 29H38" stroke="#333" stroke-width="5.4" stroke-linecap="round" /></svg></button>
                  <button type="button" aria-label="Reset north"><svg viewBox="0 0 58 58"><path d="M21 27L29 12L37 27Z" fill="#333" /><path d="M21 32L29 47L37 32Z" fill="#ccc" /></svg></button>
                </div>
                <button class="draw" type="button" aria-label="Draw zone">
                  <svg viewBox="0 0 58 58"><rect x="21" y="21" width="16" height="16" fill="none" stroke="#000" stroke-width="3.4" /><circle cx="20.8" cy="20.8" r="3.6" /><circle cx="37.2" cy="20.8" r="3.6" /><circle cx="20.8" cy="37.2" r="3.6" /><circle cx="37.2" cy="37.2" r="3.6" /></svg>
                </button>
                <div class="credit">
                  <a href="#osm">© OpenStreetMap</a>
                  <button type="button" aria-label="Attribution"><svg viewBox="0 0 48 48"><circle cx="24" cy="24" r="14.6" /><circle cx="24" cy="16.6" r="2.6" fill="#f2f2f2" /><rect x="21.4" y="21" width="5.2" height="12" rx="2.6" fill="#f2f2f2" /></svg></button>
                </div>
              </div>
            </div>
            <div class="card-foot"></div>
          </div>
        </div>
        <div class="track main-track"><div class="thumb"></div></div>
      </main>
    </div>
  </div>
</div>

<style>
  :global(body) { background: #fafafa; }
  .shell, .shell * { box-sizing: border-box; }
  .shell { display: flex; height: 100vh; overflow: hidden; font-family: Inter, sans-serif; font-size: 27px; color: #3b475f; background: #fafafa; }
  .shell button { font: inherit; border: 0; padding: 0; cursor: pointer; }
  .shell a { color: #4279b5; text-decoration: none; }
  svg { display: block; }

  .rail { display: flex; flex-direction: column; flex: none; width: 112px; background: #fff; border-right: 2px solid #d9d9e0; }
  .brand { display: flex; height: 116px; flex: none; align-items: center; justify-content: center; border-bottom: 2px solid #d9d9e0; }
  .brand svg { width: 50px; height: 56px; }
  .rail-items { padding-top: 11px; flex: 1; }
  .rail-link { display: flex; height: 92px; padding-left: 2px; align-items: center; justify-content: center; fill: #656d7f; }
  .rail-link svg, .rail-active svg { width: 40px; height: 40px; overflow: visible; }
  .rail-active { display: flex; width: 70px; height: 74px; margin: 0 auto 36px; padding-left: 2px; align-items: center; justify-content: center; border-radius: 12px; background: #fbe7de; }

  .page { display: flex; flex-direction: column; flex: 1; min-width: 0; }
  header { display: flex; flex: none; height: 116px; align-items: center; padding: 0 60px 0 58px; background: #fff; border-bottom: 2px solid #d9d9e0; }
  .client-logo { width: 210px; height: 80px; flex: none; }
  .logo-a, .logo-b { font-family: Roboto, sans-serif; font-style: italic; font-weight: 900; }
  .logo-a { font-size: 65px; fill: #10264d; }
  .logo-b { font-size: 62px; fill: #84addb; }
  .crumbs { display: flex; gap: 16px; margin-left: 32px; line-height: 40px; color: #6c7683; }
  .tools { display: flex; gap: 32px; margin-left: auto; align-items: center; }
  .search { display: flex; width: 448px; height: 74px; align-items: center; border-radius: 12px; background: #ebedee; color: #6c7683; }
  .shell .search { padding: 0 26px; font-size: 28px; }
  .magnifier { width: 28px; height: 28px; }
  .search-label { margin-left: 20px; }
  kbd { display: flex; gap: 8px; height: 34px; margin-left: auto; padding: 0 8px; align-items: center; font-family: inherit; font-size: 24px; border-radius: 6px; background: #fff; }
  .cmd { font-size: 16px; font-family: Inter, "DejaVu Sans", sans-serif; }
  .tool { position: relative; display: flex; width: 68px; height: 74px; align-items: center; justify-content: center; border-radius: 12px; background: #ebedee; }
  .tool svg { width: 30px; height: 30px; }
  .badge { position: absolute; top: -5px; right: -10px; width: 40px; height: 29px; border-radius: 10px; background: #d45d59; color: #fff; font-size: 19px; font-weight: 600; line-height: 29px; }
  .avatar { width: 74px; height: 74px; border-radius: 50%; background: #b2dfaa; color: #000; }
  .shell .avatar { font-size: 24px; font-weight: 600; }

  .body { display: flex; flex: 1; min-height: 0; }
  aside { display: flex; flex: none; width: 500px; margin: 40px 0 40px 60px; overflow: hidden; }
  .menu { flex: 1; min-width: 0; }
  section + section { margin-top: 39px; }
  h2 { margin: 0; padding: 0 0 20px; font-size: 28px; font-weight: 500; line-height: 34px; }
  ul { margin: 0; padding: 0; list-style: none; border: 2px solid #d9d9e0; border-radius: 12px; background: #fff; font-size: 28px; line-height: 1.45; }
  li + li { border-top: 2px solid #d9d9e0; }
  li a { display: block; padding: 21px 40px 20px; font-weight: 500; }
  .shell li a { color: #6c7683; }
  .current { margin: 0 -2px -2px; background: #477ab4; border-radius: 0 0 12px 12px; }
  li.current { border-color: #477ab4; }
  .shell .current a { color: #fff; padding: 21px 42px 22px; }

  .track { flex: none; border-left: 2px solid #e8e8e8; border-right: 2px solid #ededed; background: #fafafa; }
  .thumb { width: 16px; margin: 0 4px 0 6px; border-radius: 8px; background: #c1c1c1; }
  .menu-track { width: 30px; padding-top: 274px; }
  .menu-track .thumb { height: 516px; }

  main { display: flex; flex: 1; min-width: 0; margin: 32px 52px 32px 40px; overflow: hidden; }
  .content { display: flex; flex: 1; flex-direction: column; min-width: 0; margin-right: 8px; }
  .main-track { width: 30px; padding-top: 6px; }
  .main-track .thumb { height: 91%; }
  h1 { margin: 11px 0 20px; font-size: 40px; font-weight: 500; line-height: 48px; }
  p { margin: 0 0 39px; line-height: 42px; }
  .info { display: inline-block; width: 10px; height: 28px; vertical-align: -5px; }

  .card { display: flex; flex: 1; flex-direction: column; min-height: 0; }
  .filter { display: flex; height: 68px; flex: none; border: 2px solid #d9d9e0; border-bottom: 0; background: #fff; }
  .addon { display: flex; width: 78px; align-items: center; justify-content: center; background: #ebedee; border-right: 2px solid #d9d9e0; color: #7a8494; }
  .filter input { flex: 1; min-width: 0; padding: 0 24px; border: 0; outline: 0; background: none; font: inherit; color: #3b475f; }
  .filter input::placeholder { color: #6c7683; opacity: 1; }
  .split { display: grid; flex: 1; grid-template-columns: 1fr 1fr; min-height: 0; }
  .table-pane { position: relative; overflow: hidden; border: 2px solid #d9d9e0; background: #fff; }
  .card-foot { flex: none; height: 21px; background: #fff; border: 2px solid #d9d9e0; border-width: 0 2px; }
  table { width: 100%; table-layout: fixed; border-collapse: separate; border-spacing: 0; }
  .c-dot { width: 76px; }
  .c-name { width: 445px; }
  .c-active { width: 147px; }
  th { height: 72px; padding: 2px 0 0; text-align: left; font-size: 28px; font-weight: 500; border-bottom: 2px solid #d9d9e0; }
  td { height: 60px; padding: 0; line-height: 40px; border-bottom: 2px solid #d9d9e0; }
  .dot { width: 28px; height: 28px; margin-left: 16px; }
  td.name { padding: 2px 16px 0 0; overflow: hidden; text-overflow: ellipsis; white-space: nowrap; }
  td.active { padding-top: 8px; }
  td.del { padding-top: 4px; }
  .active input { display: block; width: 56px; height: 28px; margin: 0; appearance: none; border-radius: 14px; background: radial-gradient(circle at 42px 14px, #e8eef6 9px, #477ab4 10px); }
  .del button { display: block; margin-left: 21px; background: none; }
  .del svg { width: 22px; height: 26px; }
  .table-track { position: absolute; top: 72px; right: 0; bottom: 0; width: 30px; padding-top: 6px; border-right: 0; }
  .table-track .thumb { height: 41px; }

  .map { position: relative; overflow: hidden; background: #cad2d3; }
  .chart { width: 100%; height: 100%; }
  .zone { stroke: rgba(110, 100, 140, 0.11); stroke-width: 1px; }
  .border { fill: none; stroke: #a9adad; stroke-width: 2px; }
  text.sea, text.country, text.city { font-family: "Noto Sans", "Open Sans", sans-serif; }
  .sea { font-size: 21px; font-style: italic; fill: #87908f; }
  .country { font-size: 27px; font-weight: 500; fill: #6b6966; }
  .city { font-size: 18px; font-weight: 500; fill: #5f5f5f; paint-order: stroke; stroke: rgba(255, 255, 255, 0.6); stroke-width: 3px; }
  .zoom { position: absolute; top: 20px; left: 20px; width: 58px; overflow: hidden; }
  .zoom, .draw { border-radius: 8px; background: #fff; box-shadow: 0 0 0 4px rgba(0, 0, 0, 0.1); }
  .zoom button { display: block; height: 58px; background: none; }
  .zoom button + button { border-top: 2px solid #ddd; }
  .zoom svg, .draw svg { width: 58px; height: 58px; }
  .draw { position: absolute; top: 20px; right: 20px; }
  .credit { position: absolute; right: 20px; bottom: 20px; display: flex; height: 48px; align-items: center; padding-left: 16px; border-radius: 24px; background: #fff; font-size: 23px; }
  .shell .credit a { color: #404040; }
  .credit button { width: 48px; height: 48px; margin-left: 8px; border-radius: 24px; background: #f2f2f2; }
</style>
